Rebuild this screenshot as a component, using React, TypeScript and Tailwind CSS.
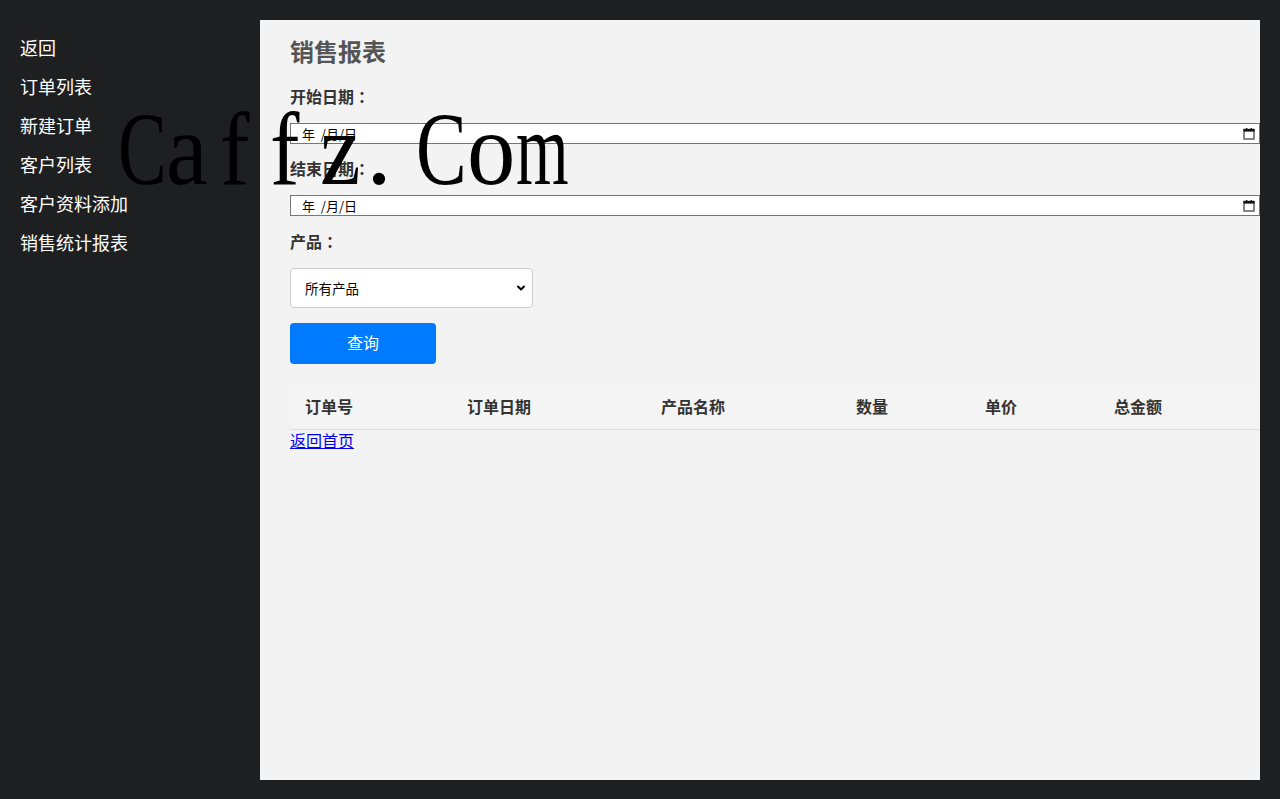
import { ChevronDown } from "lucide-react"

const menu = ["返回", "订单列表", "新建订单", "客户列表", "客户资料添加", "销售统计报表"]

const columns = [
  { name: "订单号", width: "w-[162px]" },
  { name: "订单日期", width: "w-[194px]" },
  { name: "产品名称", width: "w-[195px]" },
  { name: "数量", width: "w-[129px]" },
  { name: "单价", width: "w-[129px]" },
  { name: "总金额", width: "w-[161px]" },
]

// watermark glyphs placed one by one, the overlay is a fixed-pitch serif
const mark = [
  { ch: "C", cls: "left-[118px] scale-x-[0.7]" },
  { ch: "a", cls: "left-[166px] scale-x-[0.9]" },
  { ch: "f", cls: "left-[220px] scale-x-[0.85]" },
  { ch: "f", cls: "left-[270px] scale-x-[0.85]" },
  { ch: "z", cls: "left-[320px] scale-x-[0.88]" },
  { ch: ".", cls: "left-[366px] scale-x-[1]" },
  { ch: "C", cls: "left-[416px] scale-x-[0.73]" },
  { ch: "o", cls: "left-[467px] scale-x-[0.93]" },
  { ch: "m", cls: "left-[516px] scale-x-[0.65]" },
]

function Label({ text, mt }: { text: string; mt: string }) {
  return (
    <label className={`${mt} block h-[20px] text-[16px] font-bold leading-[16px] text-[#333]`}>
      {text}
      <span className="font-['Noto_Sans_CJK_TC',sans-serif]">：</span>
    </label>
  )
}

function DateField() {
  return (
    <div className="mt-[15px] flex h-[21px] w-[970px] items-center justify-between border border-[#767676] bg-white pl-[11px] pr-[4px]">
      <span className="text-[13px] leading-none text-black">年&nbsp;&nbsp;/月/日</span>
      <svg width="12" height="12" viewBox="0 0 12 12">
        <rect x="1" y="1.5" width="10" height="9.5" fill="none" stroke="#6b6b6b" strokeWidth="1.6" />
        <rect x="0.5" y="1" width="11" height="2.6" fill="#111" />
        <rect x="3" y="0" width="1.3" height="2" fill="#111" />
        <rect x="7.7" y="0" width="1.3" height="2" fill="#111" />
      </svg>
    </div>
  )
}

export default function App() {
  return (
    <div className="relative flex h-[799px] bg-[#1e1f21] font-['Noto_Sans_CJK_SC','Noto_Sans',sans-serif]">
      {/* Sidebar */}
      <nav className="w-[240px] shrink-0 pl-[20px] pt-[27px]">
        {menu.map((item) => (
          <div key={item} className="flex h-[39px] items-center text-[18px] leading-none text-white">
            {item}
          </div>
        ))}
      </nav>

      {/* Content panel */}
      <main className="ml-[20px] mt-[20px] h-[760px] w-[1000px] bg-[#f3f3f3] pl-[30px] pt-[19px]">
        <h2 className="h-[28px] text-[24px] font-bold leading-[24px] text-[#555]">销售报表</h2>

        <Label text="开始日期" mt="mt-[21px]" />
        <DateField />

        <Label text="结束日期" mt="mt-[16px]" />
        <DateField />

        <Label text="产品" mt="mt-[17px]" />

        <div className="relative mt-[15px] h-[40px] w-[243px]">
          <select className="h-full w-full appearance-none rounded-[4px] border border-[#ccc] bg-white pl-[14px] text-[13.5px] text-black outline-none">
            <option>所有产品</option>
          </select>
          <ChevronDown className="pointer-events-none absolute right-[6px] top-[14px] h-[12px] w-[12px] text-black" strokeWidth={4} />
        </div>

        <button className="mt-[15px] flex h-[41px] w-[146px] items-center justify-center rounded-[4px] bg-[#007bff] pb-[3px] text-[16px] text-white">
          查询
        </button>

        <table className="mt-[19px] w-[970px] border-collapse">
          <thead>
            <tr className="h-[46px] border-b border-[#ddd] bg-[#f4f4f4]">
              {columns.map((c) => (
                <th key={c.name} className={`${c.width} pl-[15px] text-left align-middle text-[16px] font-bold text-[#333]`}>
                  {c.name}
                </th>
              ))}
            </tr>
          </thead>
        </table>

        <a href="#" className="mt-[1px] block h-[20px] w-fit text-[16px] leading-[18px] text-[#0000ee] underline">
          返回首页
        </a>
      </main>

      {/* Watermark overlay */}
      <div className="pointer-events-none absolute left-0 top-[97px] h-[104px] w-[600px] font-['Liberation_Serif',serif] text-[104px] leading-none text-black">
        {mark.map((m, i) => (
          <span key={i} className={`absolute top-0 origin-left ${m.cls}`}>
            {m.ch}
          </span>
        ))}
      </div>
    </div>
  )
}
